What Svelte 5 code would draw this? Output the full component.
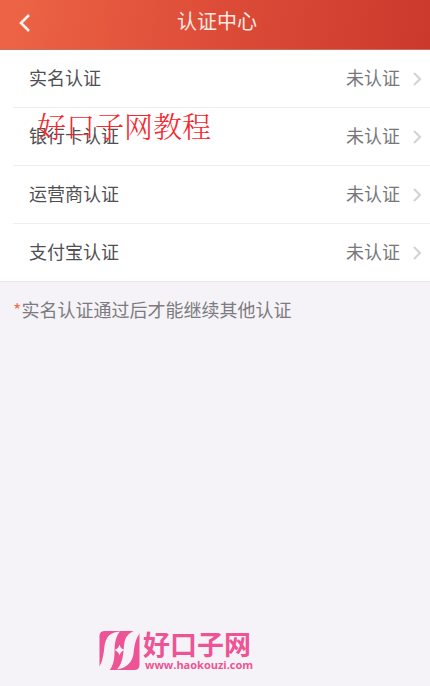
<script>
  const items = ['实名认证', '银行卡认证', '运营商认证', '支付宝认证'];
</script>

<div class="page">
  <header>
    <button class="back" aria-label="返回">
      <svg width="14" height="20" viewBox="0 0 14 20" aria-hidden="true">
        <path d="M11 2 3 10l8 8" fill="none" stroke="#fff3ec" stroke-width="2.6" />
      </svg>
    </button>
    <h1>认证中心</h1>
  </header>

  <main>
    <ul>
      {#each items as item}
        <li>
          <a href="#detail">
            <span class="name">{item}</span>
            <span class="status">未认证</span>
            <svg width="10" height="14" viewBox="0 0 10 14" aria-hidden="true">
              <path d="M2 1l6 6-6 6" fill="none" stroke="#d2d1d4" stroke-width="2" />
            </svg>
          </a>
        </li>
      {/each}
    </ul>
    <p class="note"><span>*</span>实名认证通过后才能继续其他认证</p>
    <div class="watermark">好口子网教程</div>
  </main>

  <footer>
    <svg width="42" height="42" viewBox="0 0 42 42" aria-hidden="true">
      <path d="M6 1H40.500V35Q40.500 40 35 40H.5V6Q.5 1 6 1Z" fill="#ed5496" />
      <path d="M21 1.500C11 2 7 7 5.500 16C4.500 26 3 33 0 37V42H9C14 37 15.500 30 15.500 22C15.500 13 17 6 21 1.500Z" fill="#f5f3f7" />
      <path d="M42 0H39C32 1 27 5 25.500 12C24 20 25.500 31 18 39.500C27 38 33 33 34.500 24C35.500 14 37 7 42 2Z" fill="#f5f3f7" />
      <path d="M20.500 14.500Q21.500 19 26 20Q21.500 21 20.500 25.500Q19.500 21 15 20Q19.500 19 20.500 14.500Z" fill="#f5f3f7" />
    </svg>
    <div class="brand">
      <strong>好口子网</strong>
      <span>www.haokouzi.com</span>
    </div>
  </footer>
</div>

<style>
  :global(body) {
    margin: 0;
    background: #f5f3f7;
  }
  .page {
    min-height: 100vh;
    display: flex;
    flex-direction: column;
    background: #f5f3f7;
    font-family: "Noto Sans CJK SC", sans-serif;
    font-size: 18px;
    line-height: 28px;
  }
  header {
    display: grid;
    grid-template-columns: 50px 1fr 50px;
    align-items: center;
    box-sizing: border-box;
    height: 50px;
    padding-bottom: 8px;
    background: linear-gradient(100deg, #ed6546, #dd4c38 50%, #cb392d);
    border-bottom: 1px solid #c8705f;
  }
  .back {
    display: flex;
    padding: 4px 0 0 18px;
    border: 0;
    background: none;
  }
  h1 {
    margin: 0;
    padding-left: 4px;
    color: #ffe9e0;
    font-size: 20px;
    font-weight: 400;
    text-align: center;
  }
  main {
    position: relative;
  }
  ul {
    margin: 0;
    padding: 0 0 0 13px;
    list-style: none;
    background: #fff;
    border-bottom: 1px solid #e8e7e9;
  }
  li + li {
    border-top: 1px solid #eeedef;
  }
  a {
    display: flex;
    align-items: center;
    box-sizing: border-box;
    height: 57px;
    padding: 0 8px 4px 16px;
    color: #505053;
    text-decoration: none;
  }
  .name {
    flex: 1;
  }
  .status {
    margin-right: 12px;
    color: #77777a;
  }
  a svg {
    padding-top: 4px;
  }
  .note {
    margin: 0;
    padding: 13px;
    color: #7c7b7f;
  }
  .note span {
    color: #ed7557;
  }
  .watermark {
    position: absolute;
    top: 58px;
    left: 37px;
    color: #f5282d;
    font-family: "Noto Serif CJK SC", "Noto Sans CJK SC", serif;
    font-size: 29px;
    font-weight: 300;
    line-height: 36px;
  }
  footer {
    display: flex;
    gap: 2px;
    margin-top: auto;
    padding: 0 0 14px 99px;
    color: #ed5496;
  }
  .brand {
    display: flex;
    flex-direction: column;
  }
  strong {
    font-size: 27px;
    font-weight: 700;
    line-height: 28px;
  }
  .brand span {
    padding-left: 2px;
    font-family: "Open Sans", sans-serif;
    font-size: 11px;
    font-weight: 700;
    line-height: 14px;
  }
</style>
